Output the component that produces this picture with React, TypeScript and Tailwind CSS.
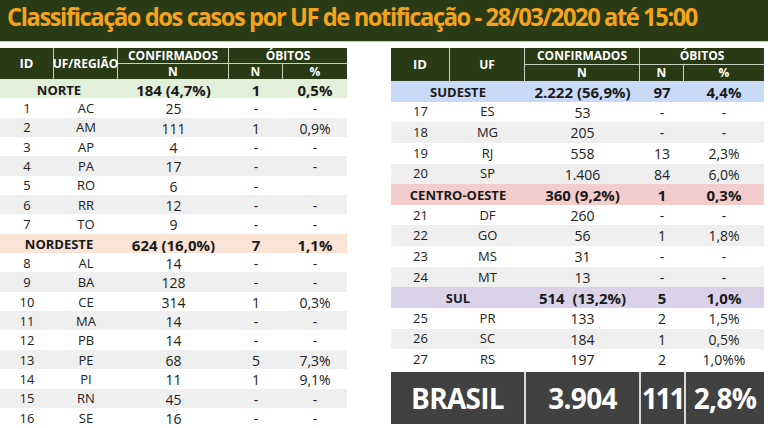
import React from "react";

type Row =
  | { kind: "region"; name: string; conf: string; n: string; p: string; bg: string }
  | { kind: "uf"; id: string; uf: string; conf: string; n: string; p: string; alt: boolean };

const region = (name: string, conf: string, n: string, p: string, bg: string): Row => ({ kind: "region", name, conf, n, p, bg });

function build(groups: { r: Row; rows: [string, string, string, string, string][] }[]): Row[] {
  const out: Row[] = [];
  groups.forEach((g) => {
    out.push(g.r);
    g.rows.forEach((x, i) => out.push({ kind: "uf", id: x[0], uf: x[1], conf: x[2], n: x[3], p: x[4], alt: i % 2 === 1 }));
  });
  return out;
}

const leftRows = build([
  {
    r: region("NORTE", "184 (4,7%)", "1", "0,5%", "bg-[#e2efd9]"),
    rows: [
      ["1", "AC", "25", "-", "-"],
      ["2", "AM", "111", "1", "0,9%"],
      ["3", "AP", "4", "-", "-"],
      ["4", "PA", "17", "-", "-"],
      ["5", "RO", "6", "-", ""],
      ["6", "RR", "12", "-", "-"],
      ["7", "TO", "9", "-", "-"],
    ],
  },
  {
    r: region("NORDESTE", "624 (16,0%)", "7", "1,1%", "bg-[#fbe4d5]"),
    rows: [
      ["8", "AL", "14", "-", "-"],
      ["9", "BA", "128", "-", "-"],
      ["10", "CE", "314", "1", "0,3%"],
      ["11", "MA", "14", "-", "-"],
      ["12", "PB", "14", "-", "-"],
      ["13", "PE", "68", "5", "7,3%"],
      ["14", "PI", "11", "1", "9,1%"],
      ["15", "RN", "45", "-", "-"],
      ["16", "SE", "16", "-", "-"],
    ],
  },
]);

const rightRows = build([
  {
    r: region("SUDESTE", "2.222 (56,9%)", "97", "4,4%", "bg-[#c9daf8]"),
    rows: [
      ["17", "ES", "53", "-", "-"],
      ["18", "MG", "205", "-", "-"],
      ["19", "RJ", "558", "13", "2,3%"],
      ["20", "SP", "1.406", "84", "6,0%"],
    ],
  },
  {
    r: region("CENTRO-OESTE", "360 (9,2%)", "1", "0,3%", "bg-[#f4cccc]"),
    rows: [
      ["21", "DF", "260", "-", "-"],
      ["22", "GO", "56", "1", "1,8%"],
      ["23", "MS", "31", "-", "-"],
      ["24", "MT", "13", "-", "-"],
    ],
  },
  {
    r: region("SUL", "514\u00a0 (13,2%)", "5", "1,0%", "bg-[#d9d2e9]"),
    rows: [
      ["25", "PR", "133", "2", "1,5%"],
      ["26", "SC", "184", "1", "0,5%"],
      ["27", "RS", "197", "2", "1,0%%"],
    ],
  },
]);

function Header({ cols, rows, uf }: { cols: string; rows: string; uf: string }) {
  const cell = "bg-[#283a16] text-white font-bold flex items-center justify-center leading-none";
  return (
    <div className={`grid ${cols} ${rows} gap-px bg-[#c9cfc1]`}>
      <div className={`${cell} row-span-2 text-[13px]`}>ID</div>
      <div className={`${cell} row-span-2 text-[12px]`}>{uf}</div>
      <div className={`${cell} text-[12px]`}>CONFIRMADOS</div>
      <div className={`${cell} col-span-2 text-[12px]`}>ÓBITOS</div>
      <div className={`${cell} text-[12px]`}>N</div>
      <div className={`${cell} text-[12px]`}>N</div>
      <div className={`${cell} text-[12px]`}>%</div>
    </div>
  );
}

function Body({ rows, cols, h }: { rows: Row[]; cols: string; h: string }) {
  return (
    <div className="flex flex-col">
      {rows.map((r, i) =>
        r.kind === "region" ? (
          <div key={i} className={`grid ${cols} ${h} ${r.bg} text-[#1a1a1a] font-bold`}>
            <div className="col-span-2 flex items-center justify-center text-[13px]">{r.name}</div>
            <div className="flex items-center justify-center text-[15px] whitespace-pre">{r.conf}</div>
            <div className="flex items-center justify-center text-[15px]">{r.n}</div>
            <div className="flex items-center justify-center text-[15px]">{r.p}</div>
          </div>
        ) : (
          <div key={i} className={`grid ${cols} ${h} ${r.alt ? "bg-[#efefef]" : "bg-white"} text-[#222]`}>
            <div className="flex items-center justify-center text-[13px]">{r.id}</div>
            <div className="flex items-center justify-center text-[13px]">{r.uf}</div>
            <div className="flex items-center justify-center text-[14px]">{r.conf}</div>
            <div className="flex items-center justify-center text-[14px]">{r.n}</div>
            <div className="flex items-center justify-center text-[14px]">{r.p}</div>
          </div>
        )
      )}
    </div>
  );
}

export default function App() {
  const leftCols = "grid-cols-[53px_63px_110px_53px_64px]";
  const rightCols = "grid-cols-[58px_74px_114px_43px_80px]";
  const rightBodyCols = "grid-cols-[59px_75px_115px_44px_80px]";
  const leftBodyCols = "grid-cols-[54px_64px_111px_54px_64px]";
  return (
    <div className="w-[768px] h-[428px] overflow-hidden bg-white" style={{ fontFamily: "'Open Sans', 'Noto Sans', sans-serif" }}>
      <div className="h-[42px] bg-[#283a16] border-b border-[#c3c9bb] pl-[7px]">
        <span className="inline-block origin-left scale-x-[0.948] -translate-y-[2px] text-[25px] leading-[36px] font-bold tracking-[-0.06em] text-[#f5a31c] whitespace-nowrap">
          Classificação dos casos por UF de notificação - 28/03/2020 até 15:00
        </span>
      </div>
      <div className="flex pt-[6px]">
        <div className="w-[347px]">
          <Header cols={leftCols} rows="grid-rows-[15px_15px]" uf="UF/REGIÃO" />
          <Body rows={leftRows} cols={leftBodyCols} h="h-[19.35px]" />
        </div>
        <div className="ml-[44px] w-[373px]">
          <Header cols={rightCols} rows="grid-rows-[16px_16px]" uf="UF" />
          <Body rows={rightRows} cols={rightBodyCols} h="h-[20.65px]" />
          <div className="mt-[2px] grid grid-cols-[133px_113px_43px_78px] gap-[2px] h-[52px] bg-[#d9d9d9]">
            <div className="bg-[#414141] text-white font-bold flex items-center justify-center text-[28px] tracking-tight">BRASIL</div>
            <div className="bg-[#414141] text-white font-bold flex items-center justify-center text-[28px] tracking-tight">3.904</div>
            <div className="bg-[#414141] text-white font-bold flex items-center justify-center text-[28px] tracking-[-0.08em]">111</div>
            <div className="bg-[#414141] text-white font-bold flex items-center justify-center text-[28px] tracking-tight">2,8%</div>
          </div>
        </div>
      </div>
    </div>
  );
}
